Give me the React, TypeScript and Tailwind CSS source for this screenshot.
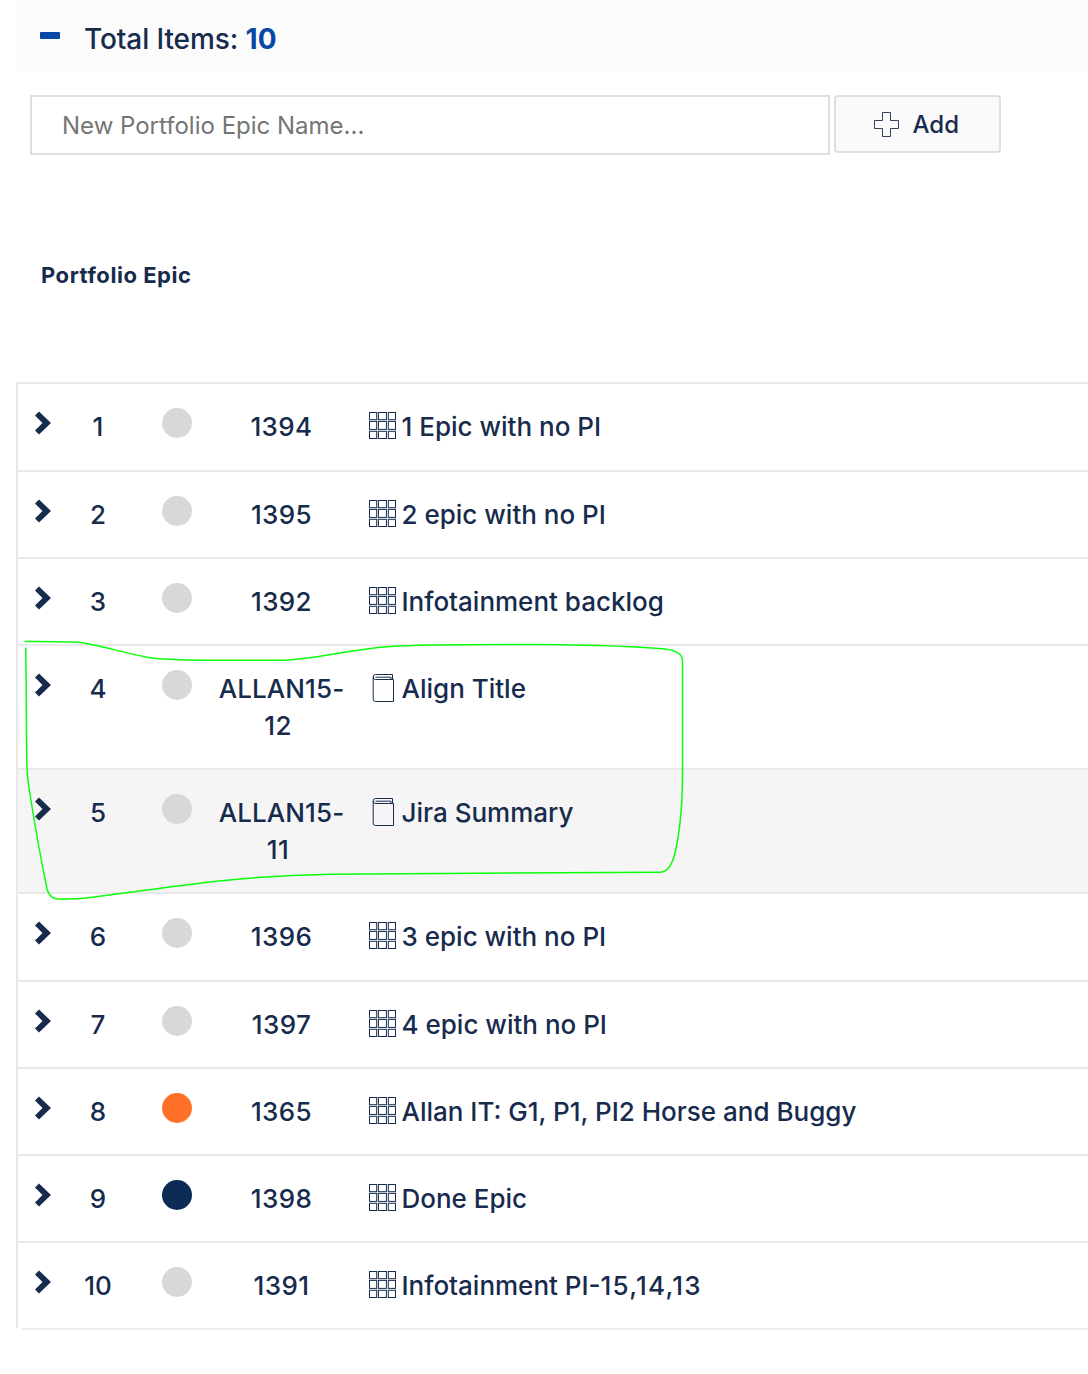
import React from 'react';

type EpicState = 'idle' | 'progress' | 'done';

interface Epic {
  rank: number;
  state: EpicState;
  id: string[];
  title: string;
  sprints?: string;
  source: 'align' | 'jira';
  height: string;
  highlighted?: boolean;
}

const EPICS: Epic[] = [
  { rank: 1, state: 'idle', id: ['1394'], title: '1 Epic with no PI', source: 'align', height: 'h-[88px]' },
  { rank: 2, state: 'idle', id: ['1395'], title: '2 epic with no PI', source: 'align', height: 'h-[87px]' },
  { rank: 3, state: 'idle', id: ['1392'], title: 'Infotainment backlog', source: 'align', height: 'h-[87px]' },
  { rank: 4, state: 'idle', id: ['ALLAN15-', '12'], title: 'Align Title', source: 'jira', height: 'h-[124px]' },
  { rank: 5, state: 'idle', id: ['ALLAN15-', '11'], title: 'Jira Summary', source: 'jira', height: 'h-[124px]', highlighted: true },
  { rank: 6, state: 'idle', id: ['1396'], title: '3 epic with no PI', source: 'align', height: 'h-[88px]' },
  { rank: 7, state: 'idle', id: ['1397'], title: '4 epic with no PI', source: 'align', height: 'h-[87px]' },
  { rank: 8, state: 'progress', id: ['1365'], title: 'Allan IT: G1, P1, PI2 Horse and Buggy', source: 'align', height: 'h-[87px]' },
  { rank: 9, state: 'done', id: ['1398'], title: 'Done Epic', source: 'align', height: 'h-[87px]' },
  { rank: 10, state: 'idle', id: ['1391'], title: 'Infotainment PI-', sprints: '15,14,13', source: 'align', height: 'h-[85px]' },
];

const STATE_COLORS: Record<EpicState, string> = {
  idle: 'bg-[#d8d8d8]',
  progress: 'bg-[#ff7029]',
  done: 'bg-[#0c2b55]',
};

function ChevronIcon() {
  return (
    <svg className="mt-[27px] ml-[17px] h-6 w-4 shrink-0" viewBox="0 0 16 24" fill="#172b4d">
      <path d="M4 .4 16 12 4 23.6 0 19.6 7.5 12 0 4.4Z" />
    </svg>
  );
}

function GridIcon() {
  const cells = [
    { at: 0.5, size: 7.2 },
    { at: 9.4, size: 8 },
    { at: 19.3, size: 7.2 },
  ];
  return (
    <svg className="mt-1 h-[27px] w-[27px] shrink-0" viewBox="0 0 27 27" fill="none" stroke="#172b4d">
      {cells.map((row) =>
        cells.map((col) => (
          <rect key={`${col.at}-${row.at}`} x={col.at} y={row.at} width={col.size} height={row.size} />
        )),
      )}
    </svg>
  );
}

function BookIcon() {
  return (
    <svg className="mt-1 ml-1 h-[28px] w-[21px] shrink-0 overflow-visible" viewBox="0 0 21 28" fill="none" stroke="#172b4d">
      <path d="M.2 3v22q0 2.500 2.300 2.500h18V5.500H2.500Q.2 5.500.2 3T2.500.5h17v4.500M2.500 3.200h15.500v2" />
    </svg>
  );
}

function PlusIcon() {
  return (
    <svg className="h-[25px] w-[25px]" viewBox="0 0 25 25" fill="none" stroke="#172b4d" strokeWidth="0.9">
      <path d="M8.500.5h8v8h8v8h-8v8h-8v-8h-8v-8h8Z" />
    </svg>
  );
}

function EpicRow({ epic, last }: { epic: Epic; last: boolean }) {
  return (
    <div
      className={`flex items-start ${epic.height} ${last ? '' : 'border-b-2 border-[#e9e9e9]'} ${
        epic.highlighted ? 'bg-[#f5f5f5]' : ''
      }`}
    >
      <ChevronIcon />
      <span className="mt-6 ml-[17px] w-[60px] text-center">{epic.rank}</span>
      <span className={`mt-6 ml-[34px] size-[30px] shrink-0 rounded-full ${STATE_COLORS[epic.state]}`} />
      <span className="mt-6 ml-[19px] flex w-[141px] flex-col items-center">
        <span className={epic.id[1] ? 'tracking-[0.1px]' : 'tracking-[0.4px]'}>{epic.id[0]}</span>
        {epic.id[1] && <span className="mr-[7px] tracking-[0.4px]">{epic.id[1]}</span>}
      </span>
      <span className="mt-6 ml-[17px] flex w-8 shrink-0">{epic.source === 'align' ? <GridIcon /> : <BookIcon />}</span>
      <span className="mt-6 ml-[0.5px] whitespace-nowrap">
        {epic.title}
        {epic.sprints && <span className="tracking-[1.2px]">{epic.sprints}</span>}
      </span>
    </div>
  );
}

// Freehand marker drawn round the two Jira rows
function MarkerOutline() {
  return (
    <svg
      className="pointer-events-none absolute top-0 left-0 h-[1374px] w-[1088px]"
      viewBox="0 0 1088 1374"
      fill="none"
      stroke="#0aff0a"
      strokeWidth="1.5"
    >
      <path d="M24.500 641.500C45 641.300 65 641.800 78 642.300C96 644 120 652 147 657.300C168 661 215 660.300 284 660.200C318 659 345 650 390 646.500C425 644 480 644.300 540 644.500C585 645 635 646 665 649Q682.500 651 682.500 661V780C682 815 678.500 840 674 857Q669 872.300 660 872.300C560 873.500 440 873 330 874.300C220 876 150 891 88 897.800C70 899.500 60 899.800 55 898.500Q49 896.500 47 889C40 855 34 820 29 788Q27 775 26.800 764C26.200 725 26.500 690 25.700 647.500" />
    </svg>
  );
}

export default function App() {
  return (
    <div className="relative h-[1374px] w-[1088px] overflow-hidden bg-white font-['Inter',sans-serif] text-[26px] leading-[37px] font-medium text-[#172b4d]">
      <header className="ml-4 flex h-[72px] items-center bg-[#fbfbfb] pt-[7px] pl-6">
        <span className="mb-2 h-[7px] w-5 rounded-[1px] bg-[#0747a6]" />
        <h1 className="ml-6 text-[28px] leading-[37px] tracking-[-0.1px] whitespace-nowrap">
          Total Items: <span className="font-bold tracking-[0.3px] text-[#0747a6]">10</span>
        </h1>
      </header>

      <div className="mt-[23px] ml-[30px] flex items-start gap-1">
        <input
          className="h-[60px] w-[800px] border-2 border-[#dfdfdf] px-[30px] text-[24px] font-normal placeholder:text-[#757575]"
          placeholder="New Portfolio Epic Name..."
        />
        <button className="flex h-[58px] w-[167px] items-center rounded-[4px] border-2 border-[#dfdfdf] bg-[#fafafa] pl-[38px] text-[24px]">
          <PlusIcon />
          <span className="ml-[13.5px]">Add</span>
        </button>
      </div>

      <h2 className="mt-[102px] ml-[41px] h-[37px] text-[22px] font-bold tracking-[0.55px]">Portfolio Epic</h2>

      <main className="mt-[88px] ml-4">
        <div className="border-t-2 border-l-2 border-[#e9e9e9]">
          {EPICS.map((epic, index) => (
            <EpicRow key={epic.rank} epic={epic} last={index === EPICS.length - 1} />
          ))}
        </div>
        <div className="ml-[6px] h-[2px] bg-[#ededed]" />
      </main>

      <MarkerOutline />
    </div>
  );
}
